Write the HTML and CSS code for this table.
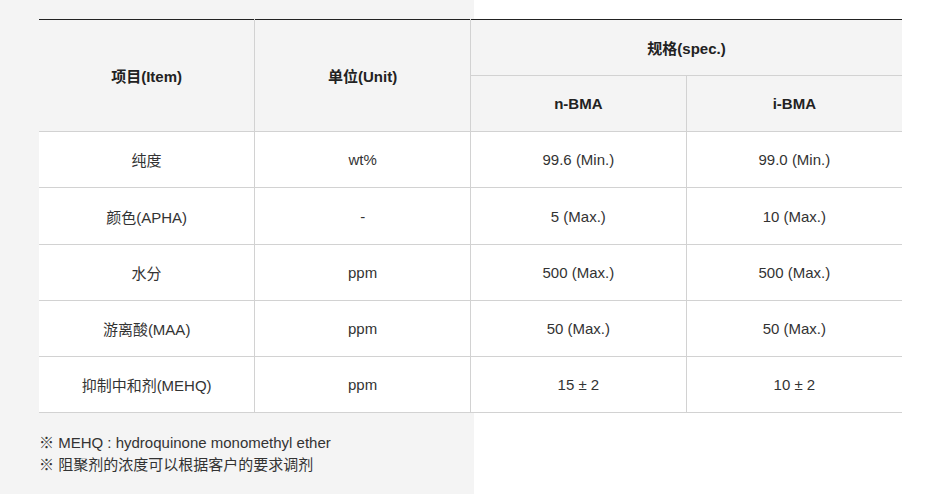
FILE: index.html
```html
<!DOCTYPE html>
<html lang="zh">
<head>
<meta charset="utf-8">
<link rel="stylesheet" href="styles.css">
</head>
<body>
<div class="page">
  <table class="spec">
    <thead>
      <tr>
        <th rowspan="2">项目(Item)</th>
        <th rowspan="2">单位(Unit)</th>
        <th colspan="2" class="group">规格(spec.)</th>
      </tr>
      <tr>
        <th>n-BMA</th>
        <th class="last">i-BMA</th>
      </tr>
    </thead>
    <tbody>
      <tr><td>纯度</td><td>wt%</td><td>99.6 (Min.)</td><td class="last">99.0 (Min.)</td></tr>
      <tr class="tall"><td>颜色(APHA)</td><td>-</td><td>5 (Max.)</td><td class="last">10 (Max.)</td></tr>
      <tr><td>水分</td><td>ppm</td><td>500 (Max.)</td><td class="last">500 (Max.)</td></tr>
      <tr><td>游离酸(MAA)</td><td>ppm</td><td>50 (Max.)</td><td class="last">50 (Max.)</td></tr>
      <tr><td>抑制中和剂(MEHQ)</td><td>ppm</td><td>15 ± 2</td><td class="last">10 ± 2</td></tr>
    </tbody>
  </table>
  <div class="notes">
    <p>※ MEHQ : hydroquinone monomethyl ether</p>
    <p>※ 阻聚剂的浓度可以根据客户的要求调剂</p>
  </div>
</div>
</body>
</html>
```
FILE: styles.css
```css
html, body {
  margin: 0;
  padding: 0;
}
body {
  background: linear-gradient(to right, #f4f4f4 0, #f4f4f4 474px, #ffffff 474px);
  font-family: "Liberation Sans", "Noto Sans CJK SC", sans-serif;
  color: #333;
  height: 494px;
  overflow: hidden;
}
.page {
  padding: 19px 0 0 39px;
}
.spec {
  width: 863px;
  border-collapse: collapse;
  table-layout: fixed;
  border-top: 1px solid #222;
  font-size: 15px;
}
.spec th, .spec td {
  text-align: center;
  vertical-align: middle;
  border: 1px solid #d2d2d2;
  padding: 0;
}
.spec tr > :first-child {
  border-left: none;
}
.spec .last {
  border-right: none;
}
.spec th {
  background: #f4f4f4;
  font-weight: bold;
  color: #222;
  height: 55px;
}
.spec th.group {
  border-right: none;
}
.spec thead tr:first-child th {
  border-top: 1px solid #222;
}
.spec td {
  background: #fff;
  height: 55px;
  color: #333;
}
.spec tr.tall td {
  height: 56px;
}
.notes {
  margin-top: 19px;
  font-size: 15px;
  line-height: 22px;
  color: #333;
}
.notes p {
  margin: 0;
}
```
